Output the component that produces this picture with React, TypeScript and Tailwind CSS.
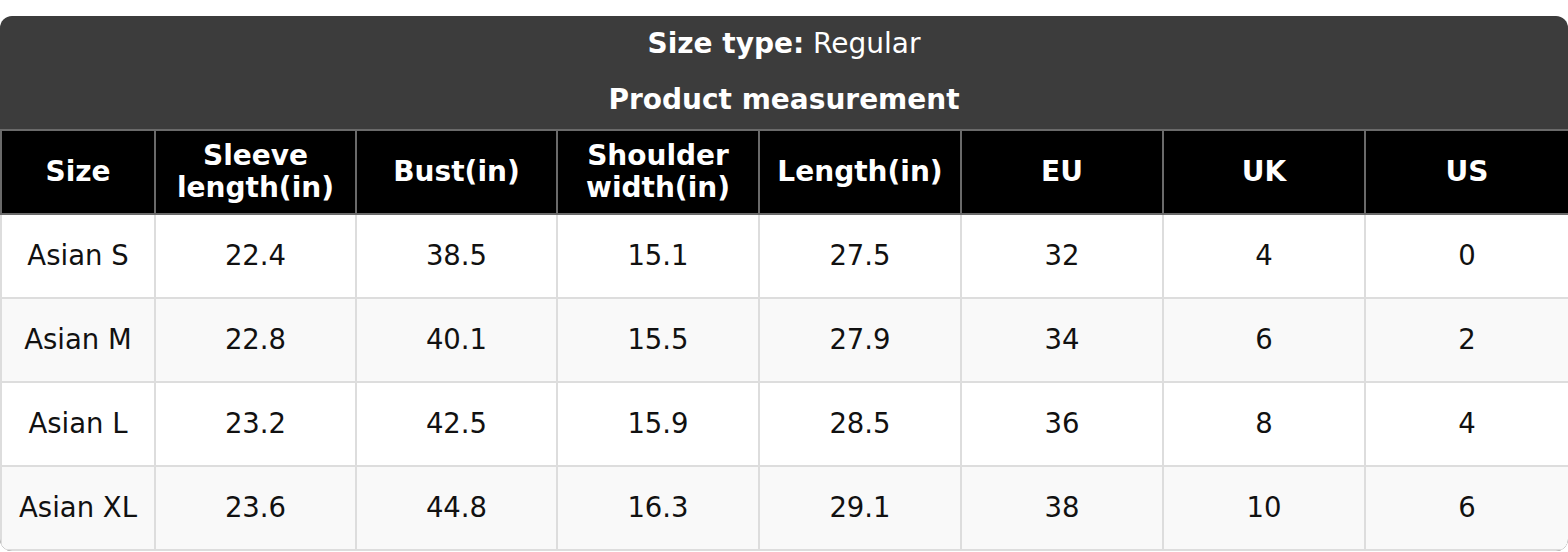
import React from "react";

// Size chart rows
const headers = [
    ["Size"],
    ["Sleeve", "length(in)"],
    ["Bust(in)"],
    ["Shoulder", "width(in)"],
    ["Length(in)"],
    ["EU"],
    ["UK"],
    ["US"],
];

const rows = [
    ["Asian S", "22.4", "38.5", "15.1", "27.5", "32", "4", "0"],
    ["Asian M", "22.8", "40.1", "15.5", "27.9", "34", "6", "2"],
    ["Asian L", "23.2", "42.5", "15.9", "28.5", "36", "8", "4"],
    ["Asian XL", "23.6", "44.8", "16.3", "29.1", "38", "10", "6"],
];

const colWidths = [154, 201, 201, 202, 202, 202, 202, 204];

const App = () => {
    return (
        <div className="bg-white pt-[16px] font-['DejaVu_Sans',sans-serif] text-[27.5px]">
            <div className="rounded-[12px] overflow-hidden bg-[#3c3c3c]">
                {/* Title */}
                <div className="flex flex-col items-center text-white text-[28px] leading-[32px] pt-[12px] pb-[13px] gap-[24px]">
                    <div>
                        <span className="font-bold">Size type:</span> Regular
                    </div>
                    <div className="font-bold">Product measurement</div>
                </div>

                {/* Table */}
                <table className="w-[1568px] table-fixed border-collapse">
                    <colgroup>
                        {colWidths.map((w, i) => (
                            <col key={i} style={{ width: w }} />
                        ))}
                    </colgroup>
                    <thead>
                        <tr className="h-[84px]">
                            {headers.map((h, i) => (
                                <th
                                    key={i}
                                    className="bg-black text-white text-[28px] font-bold leading-[32px] border-2 border-[#6a6a6a] p-0"
                                >
                                    {h.map((line, j) => (
                                        <div key={j}>{line}</div>
                                    ))}
                                </th>
                            ))}
                        </tr>
                    </thead>
                    <tbody>
                        {rows.map((row, i) => (
                            <tr
                                key={i}
                                className={
                                    i % 2 === 0
                                        ? "h-[84px] bg-white"
                                        : "h-[84px] bg-[#f9f9f9]"
                                }
                            >
                                {row.map((cell, j) => (
                                    <td
                                        key={j}
                                        className="text-center text-[#111] border-2 border-[#dddddd] p-0"
                                    >
                                        {cell}
                                    </td>
                                ))}
                            </tr>
                        ))}
                    </tbody>
                </table>
            </div>
        </div>
    );
};

export default App;
